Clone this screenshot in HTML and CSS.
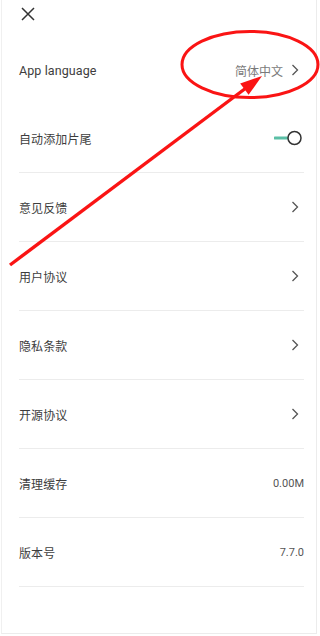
FILE: index.html
```html
<!DOCTYPE html>
<html lang="zh">
<head>
<meta charset="utf-8">
<link rel="stylesheet" href="styles.css">
</head>
<body>
<div class="page">
  <div class="header">
    <svg class="close" width="14" height="14" viewBox="0 0 14 14"><path d="M1 1L13 13M13 1L1 13" stroke="#333" stroke-width="1.5" fill="none"/></svg>
  </div>
  <div class="list">
    <div class="row first">
      <span class="label">App language</span>
      <span class="right"><span class="value lang">简体中文</span><svg class="chev" width="8" height="12" viewBox="0 0 8 12"><path d="M1.5 1L6.5 6L1.5 11" stroke="#555" stroke-width="1.3" fill="none"/></svg></span>
    </div>
    <div class="row">
      <span class="label">自动添加片尾</span>
      <span class="right"><svg class="toggle" width="30" height="16" viewBox="0 0 30 16"><path d="M1 8H14" stroke="#5bbfa6" stroke-width="3" stroke-linecap="round"/><circle cx="20.5" cy="8" r="6.5" fill="#fff" stroke="#333" stroke-width="1.5"/></svg></span>
    </div>
    <div class="row">
      <span class="label">意见反馈</span>
      <span class="right"><svg class="chev" width="8" height="12" viewBox="0 0 8 12"><path d="M1.5 1L6.5 6L1.5 11" stroke="#555" stroke-width="1.3" fill="none"/></svg></span>
    </div>
    <div class="row">
      <span class="label">用户协议</span>
      <span class="right"><svg class="chev" width="8" height="12" viewBox="0 0 8 12"><path d="M1.5 1L6.5 6L1.5 11" stroke="#555" stroke-width="1.3" fill="none"/></svg></span>
    </div>
    <div class="row">
      <span class="label">隐私条款</span>
      <span class="right"><svg class="chev" width="8" height="12" viewBox="0 0 8 12"><path d="M1.5 1L6.5 6L1.5 11" stroke="#555" stroke-width="1.3" fill="none"/></svg></span>
    </div>
    <div class="row">
      <span class="label">开源协议</span>
      <span class="right"><svg class="chev" width="8" height="12" viewBox="0 0 8 12"><path d="M1.5 1L6.5 6L1.5 11" stroke="#555" stroke-width="1.3" fill="none"/></svg></span>
    </div>
    <div class="row">
      <span class="label">清理缓存</span>
      <span class="right"><span class="value num">0.00M</span></span>
    </div>
    <div class="row">
      <span class="label">版本号</span>
      <span class="right"><span class="value num">7.7.0</span></span>
    </div>
  </div>
  <svg class="annot" width="320" height="636" viewBox="0 0 320 636">
    <ellipse cx="250" cy="64.5" rx="68" ry="33" fill="none" stroke="#fa1414" stroke-width="3"/>
    <path d="M10 265L248 86.5" stroke="#fa1414" stroke-width="3.4" fill="none"/>
    <polygon points="262,76 248.6,94.8 240.2,83.6" fill="#fa1414"/>
  </svg>
</div>
</body>
</html>
```
FILE: styles.css
```css
html, body {
  margin: 0;
  padding: 0;
  background: #fff;
}
body {
  width: 320px;
  height: 636px;
  overflow: hidden;
  font-family: Roboto, "Noto Sans CJK SC", sans-serif;
}
.page {
  position: relative;
  width: 314px;
  height: 633px;
  margin-left: 1px;
  border-left: 1px solid #f0f0f0;
  border-right: 1px solid #ececec;
  border-bottom: 1px solid #ececec;
}
.header {
  height: 36px;
  display: flex;
  align-items: flex-start;
  padding-left: 19px;
}
.close {
  margin-top: 7px;
}
.list {
  padding: 0 12px 0 17px;
}
.row {
  height: 68px;
  display: flex;
  align-items: center;
  justify-content: space-between;
  border-bottom: 1px solid #ececec;
}
.row.first {
  border-bottom: none;
}
.label {
  font-size: 12px;
  color: #3d3d3d;
  letter-spacing: 0.1px;
}
.row.first .label {
  font-size: 12.5px;
}
.right {
  display: flex;
  align-items: center;
}
.value {
  color: #7a7a7a;
}
.lang {
  font-size: 12px;
  margin-right: 8px;
}
.num {
  font-size: 11px;
  color: #555;
}
.chev {
  display: block;
  margin-right: 5px;
}
.toggle {
  display: block;
  margin-right: 0;
}
.annot {
  position: absolute;
  left: -2px;
  top: 0;
  pointer-events: none;
}
```
